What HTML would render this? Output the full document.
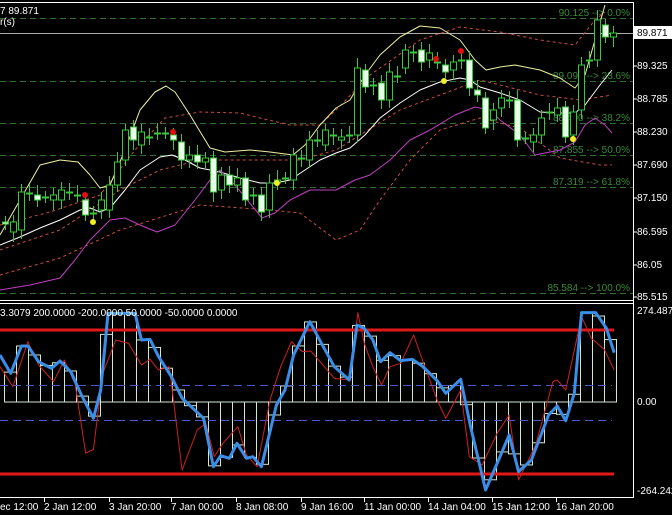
<!DOCTYPE html>
<html><head><meta charset="utf-8">
<style>
html,body{margin:0;padding:0;background:#000;}
body{width:672px;height:515px;overflow:hidden;position:relative;font-family:"Liberation Sans",sans-serif;}
svg{position:absolute;left:0;top:0;}
.t{font-family:"Liberation Sans",sans-serif;font-size:10px;fill:#fff;}
.g{font-family:"Liberation Sans",sans-serif;font-size:10px;fill:#3a8a3a;}
</style></head><body>
<svg id="s" width="672" height="515" viewBox="0 0 672 515">
<rect width="672" height="515" fill="#000"/>
<!-- fib lines -->
<g stroke="#2f6e2f" stroke-width="1" stroke-dasharray="6,4">
<line x1="0" y1="18.5" x2="633" y2="18.5"/>
<line x1="0" y1="81.5" x2="633" y2="81.5"/>
<line x1="0" y1="123.5" x2="633" y2="123.5"/>
<line x1="0" y1="155.5" x2="633" y2="155.5"/>
<line x1="0" y1="187.5" x2="633" y2="187.5"/>
<line x1="0" y1="293.5" x2="633" y2="293.5"/>
</g>
<g class="g" text-anchor="end">
<text x="630" y="16" class="g">90.125 --&gt; 0.0%</text>
<text x="630" y="79" class="g">89.093 --&gt; 23.6%</text>
<text x="630" y="121" class="g">88.490 --&gt; 38.2%</text>
<text x="630" y="153" class="g">87.855 --&gt; 50.0%</text>
<text x="630" y="185" class="g">87.319 --&gt; 61.8%</text>
<text x="630" y="291" class="g">85.584 --&gt; 100.0%</text>
</g>
<line x1="0" y1="33.5" x2="633" y2="33.5" stroke="#aaa" stroke-width="1"/>
<g id="lines" fill="none"></g>
<g id="candles"></g>
<g id="dots"></g>
<!-- frames -->
<line x1="0" y1="2.5" x2="634" y2="2.5" stroke="#fff"/>
<line x1="633.5" y1="2" x2="633.5" y2="498" stroke="#fff"/>
<line x1="0" y1="300.5" x2="634" y2="300.5" stroke="#fff"/>
<line x1="0" y1="303.5" x2="634" y2="303.5" stroke="#fff"/>
<line x1="0" y1="497.5" x2="634" y2="497.5" stroke="#fff"/>
<text x="0" y="14" class="t">7 89.871</text>
<text x="0" y="25" class="t">r(s)</text>
<!-- price axis -->
<g class="t">
<text x="637" y="69">89.325</text>
<text x="637" y="102">88.785</text>
<text x="637" y="135">88.230</text>
<text x="637" y="168">87.690</text>
<text x="637" y="201">87.150</text>
<text x="637" y="235">86.595</text>
<text x="637" y="268">86.05</text>
<text x="637" y="300">85.515</text>
<text x="637" y="314">274.487</text>
<text x="637" y="405">0.00</text>
<text x="637" y="494">-264.242</text>
</g>
<g stroke="#fff"><line x1="634" y1="66" x2="637" y2="66"/><line x1="634" y1="99" x2="637" y2="99"/><line x1="634" y1="132" x2="637" y2="132"/><line x1="634" y1="165" x2="637" y2="165"/><line x1="634" y1="198" x2="637" y2="198"/><line x1="634" y1="232" x2="637" y2="232"/><line x1="634" y1="265" x2="637" y2="265"/><line x1="634" y1="297" x2="637" y2="297"/></g>
<rect x="634" y="26" width="38" height="13" fill="#fff"/>
<text x="637" y="36" style="font-size:10px;fill:#000;font-family:'Liberation Sans',sans-serif">89.871</text>
<!-- lower panel -->
<g id="hist" fill="none" stroke="#cfe8cf" stroke-width="1"></g>
<line x1="0" y1="385.5" x2="612" y2="385.5" stroke="#4a5ad0" stroke-dasharray="8,5"/>
<line x1="0" y1="420.5" x2="612" y2="420.5" stroke="#4a5ad0" stroke-dasharray="8,5"/>
<line x1="0" y1="330" x2="614" y2="330" stroke="#e01818" stroke-width="3"/>
<line x1="0" y1="474" x2="614" y2="474" stroke="#e01818" stroke-width="3"/>
<g id="osc" fill="none"></g>
<text x="0" y="316" class="t">3.3079 200.0000 -200.0000 50.0000 -50.0000 0.0000</text>
<!-- time axis -->
<g class="t">
<text x="0" y="510">ec 12:00</text>
<text x="44" y="510">2 Jan 12:00</text>
<text x="109" y="510">3 Jan 20:00</text>
<text x="171" y="510">7 Jan 00:00</text>
<text x="236" y="510">8 Jan 08:00</text>
<text x="301" y="510">9 Jan 16:00</text>
<text x="364" y="510">11 Jan 00:00</text>
<text x="428" y="510">14 Jan 04:00</text>
<text x="492" y="510">15 Jan 12:00</text>
<text x="556" y="510">16 Jan 20:00</text>
</g>
<g stroke="#fff"><line x1="44.5" y1="498" x2="44.5" y2="502"/><line x1="109.5" y1="498" x2="109.5" y2="502"/><line x1="171.5" y1="498" x2="171.5" y2="502"/><line x1="236.5" y1="498" x2="236.5" y2="502"/><line x1="301.5" y1="498" x2="301.5" y2="502"/><line x1="364.5" y1="498" x2="364.5" y2="502"/><line x1="428.5" y1="498" x2="428.5" y2="502"/><line x1="492.5" y1="498" x2="492.5" y2="502"/><line x1="556.5" y1="498" x2="556.5" y2="502"/></g>
</svg>
<script>
var NS="http://www.w3.org/2000/svg";
function el(p,t,a){var e=document.createElementNS(NS,t);for(var k in a)e.setAttribute(k,a[k]);p.appendChild(e);return e;}
function pl(p,pts,st,w,da){el(p,"polyline",{points:pts.map(function(q){return q.join(",")}).join(" "),stroke:st,"stroke-width":w,"stroke-dasharray":da||"none",fill:"none","stroke-linejoin":"round"});}
var L=document.getElementById("lines");
pl(L,[[0,225],[50,212],[100,195],[135,150],[165,118],[200,112],[240,113],[260,118],[290,125],[320,125],[336,110],[370,75],[420,40],[460,27],[500,32],[540,40],[575,45],[595,20],[605,12]],"#c8503a",1,"3,3");
pl(L,[[0,250],[60,230],[120,190],[160,170],[200,160],[300,160],[336,150],[400,110],[480,80],[540,95],[580,100],[612,95]],"#c8503a",1,"3,3");
pl(L,[[0,275],[60,258],[120,230],[200,205],[270,210],[300,213],[336,240],[360,230],[380,200],[410,160],[440,130],[480,118],[520,128],[560,158],[600,165],[612,165]],"#c8503a",1,"3,3");
pl(L,[[0,235],[20,200],[40,165],[60,160],[78,162],[90,175],[100,188],[110,185],[125,150],[140,110],[155,92],[166,86],[175,92],[190,115],[210,148],[225,152],[250,150],[270,152],[293,155],[305,145],[320,125],[336,108],[350,100],[365,75],[380,55],[400,37],[420,26],[440,28],[460,40],[475,60],[486,70],[500,67],[515,65],[540,70],[560,78],[575,88],[585,75],[595,40],[605,5]],"#f0f0a0",1);
pl(L,[[0,245],[20,237],[40,228],[60,220],[80,210],[90,208],[100,212],[110,208],[125,190],[140,170],[160,157],[172,155],[185,160],[200,168],[220,172],[240,178],[260,183],[275,183],[290,180],[305,170],[320,160],[336,153],[350,148],[365,135],[380,118],[400,103],[420,90],[440,82],[460,78],[470,80],[480,87],[500,93],[520,100],[540,112],[560,113],[575,113],[585,105],[600,85],[612,70]],"#ffffff",1);
pl(L,[[0,290],[30,285],[60,278],[75,260],[90,240],[110,220],[125,218],[140,225],[157,232],[175,225],[195,200],[210,180],[220,170],[235,185],[262,218],[275,213],[290,200],[310,190],[336,190],[355,180],[370,175],[390,160],[410,140],[430,130],[455,115],[475,107],[490,110],[500,120],[520,135],[535,155],[560,150],[575,142],[585,125],[595,118],[605,125],[612,133]],"#c040c0",1);
// candles x,open,close (y coords)
var C=[[5,222,224],[13,232,222],[21,230,192],[29,193,193],[37,195,200],[45,197,197],[53,200,195],[61,200,190],[69,192,192],[77,195,195],[85,200,215],[93,213,214],[101,210,200],[109,210,185],[117,185,162],[125,160,130],[133,127,140],[141,145,132],[149,137,137],[157,133,133],[165,133,133],[173,135,140],[181,142,160],[189,160,155],[197,155,162],[205,162,158],[213,158,192],[221,190,175],[229,175,185],[237,185,178],[245,178,200],[253,195,195],[261,195,212],[269,210,183],[277,183,180],[285,178,178],[293,180,155],[301,158,158],[309,160,140],[317,140,140],[325,145,130],[333,135,135],[341,140,137],[349,135,135],[357,135,68],[365,70,87],[373,85,85],[381,83,100],[389,100,72],[397,76,76],[405,68,50],[413,52,52],[421,50,62],[429,60,53],[437,62,62],[445,65,72],[453,70,62],[461,60,60],[469,60,88],[477,90,95],[485,98,128],[493,120,110],[501,108,98],[509,100,100],[517,100,140],[525,138,138],[533,142,135],[541,135,118],[549,112,112],[557,115,108],[565,107,137],[573,135,112],[581,110,65],[589,60,60],[597,60,20],[605,25,37],[613,37,33]];
var G=document.getElementById("candles");
C.forEach(function(c){var x=c[0],o=c[1],cl=c[2],t=Math.min(o,cl),b=Math.max(o,cl);
el(G,"line",{x1:x+.5,x2:x+.5,y1:t-6-(x*7%5),y2:b+6+(x*3%5),stroke:"#3cc83c"});
var h=Math.max(b-t,1);
el(G,"rect",{x:x-2.5,y:t,width:6,height:h,fill:cl>o?"#eaffea":"#000",stroke:"#3cc83c","stroke-width":1});});
var D=document.getElementById("dots");
[[85,195,"#e01010"],[173,132,"#e01010"],[436,59,"#e01010"],[461,51,"#e01010"],[93,222,"#f0f020"],[277,183,"#f0f020"],[444,81,"#f0f020"],[573,139,"#f0f020"]].forEach(function(d){el(D,"circle",{cx:d[0],cy:d[1],r:3,fill:d[2]});});
// oscillator (zoom coords)
function cv(a){return a.map(function(q){return [q[0]/2.3333,290+q[1]/3];});}
var B=cv([[0,195],[25,250],[50,168],[65,168],[90,215],[120,235],[140,213],[165,245],[190,315],[218,385],[235,300],[252,70],[315,70],[330,150],[350,148],[370,200],[400,260],[425,325],[475,385],[498,530],[515,497],[535,505],[553,460],[575,505],[590,500],[610,530],[645,345],[665,300],[685,195],[723,95],[750,160],[780,230],[815,270],[833,105],[850,115],[870,150],[888,215],[910,188],[935,212],[962,208],[985,228],[1020,272],[1040,310],[1075,268],[1098,410],[1133,600],[1165,505],[1188,435],[1210,545],[1240,510],[1280,375],[1300,348],[1320,392],[1340,310],[1357,68],[1390,68],[1415,115],[1433,188]]);
var R=cv([[0,230],[30,290],[65,155],[90,225],[125,275],[150,210],[175,280],[200,490],[218,478],[240,250],[270,150],[300,160],[330,225],[350,208],[370,240],[395,230],[425,540],[460,420],[480,400],[500,500],[520,460],[555,410],[575,495],[600,530],[630,330],[655,230],[680,155],[705,185],[725,183],[750,220],[780,265],[815,270],[835,68],[850,160],[870,230],[890,285],[910,230],[935,220],[965,135],[990,225],[1020,330],[1040,385],[1075,300],[1095,500],[1125,525],[1160,430],[1188,375],[1210,570],[1250,465],[1290,275],[1300,270],[1320,300],[1357,80],[1380,145],[1410,178],[1433,240]]);
function interp(a,x){for(var i=1;i<a.length;i++){if(a[i][0]>=x){var p=a[i-1],q=a[i],t=(x-p[0])/((q[0]-p[0])||1);return p[1]+t*(q[1]-p[1]);}}return a[a.length-1][1];}
var H=document.getElementById("hist");
for(var x=4;x<612;x+=12){var y=interp(B,x+6);if(y<312)y=312;if(y>488)y=488;var t=Math.min(y,402),b=Math.max(y,402);el(H,"rect",{x:x+.5,y:t,width:12,height:Math.max(b-t,0.5)});}
var O=document.getElementById("osc");
pl(O,R,"#d02020",1);
pl(O,B,"#3a8ee8",3);
</script>
</body></html>
